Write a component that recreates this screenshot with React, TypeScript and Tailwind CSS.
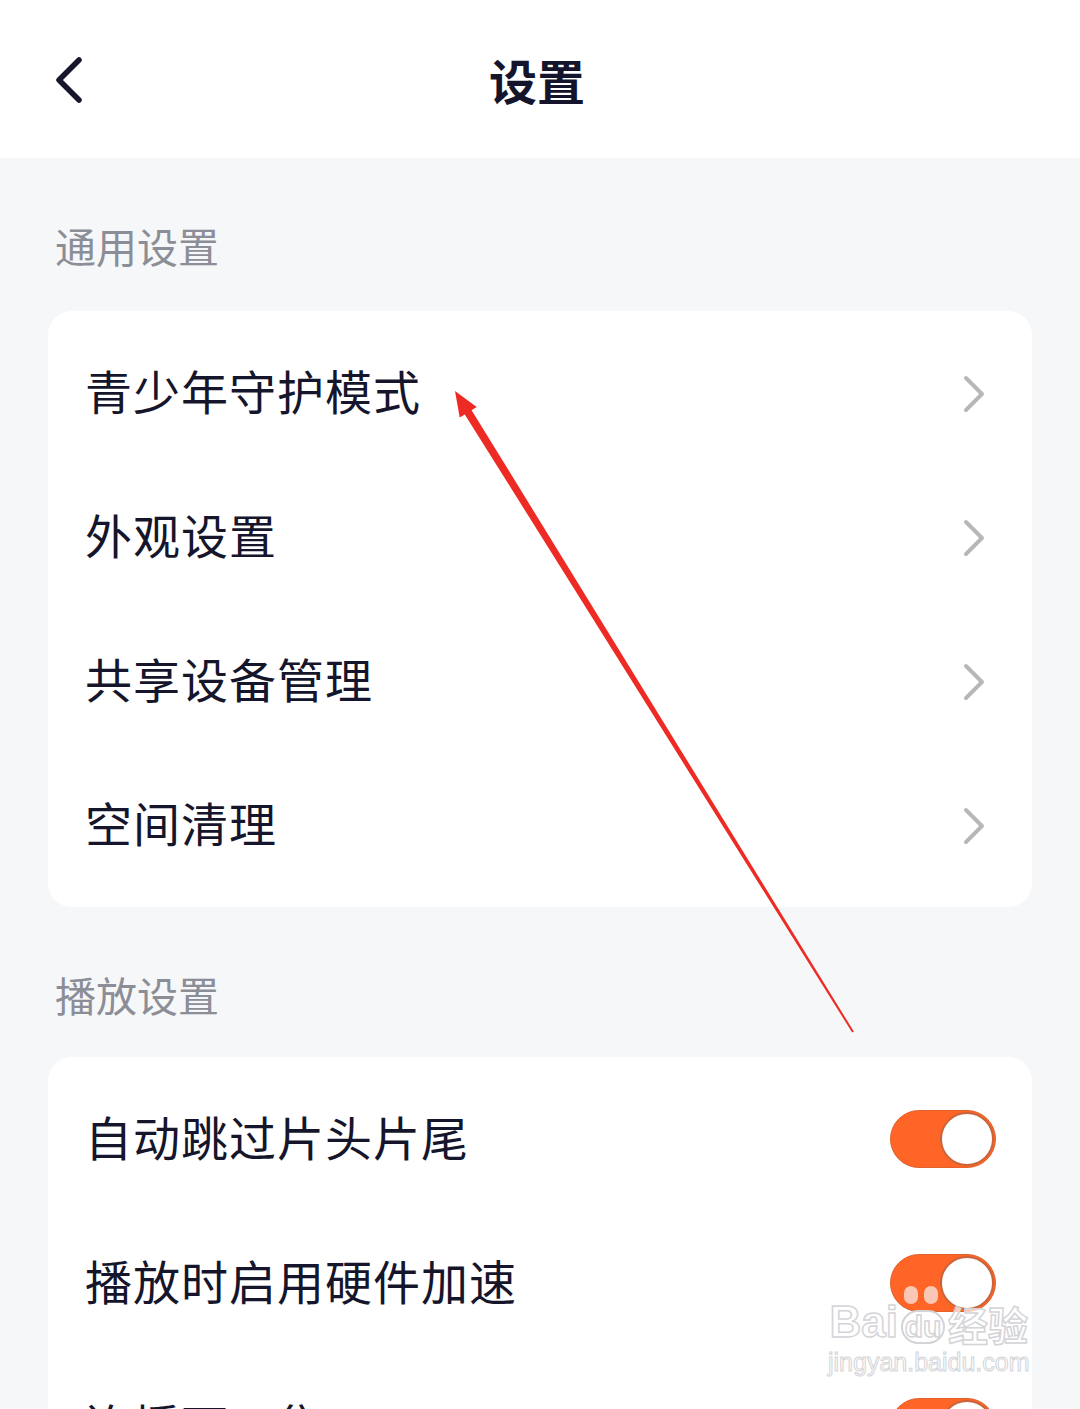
import React from "react"

const general = ["青少年守护模式", "外观设置", "共享设备管理", "空间清理"]
const playback = ["自动跳过片头片尾", "播放时启用硬件加速", "连播下一集"]

function Chevron() {
  return (
    <svg width="24" height="38" viewBox="0 0 24 38" fill="none">
      <path d="M4 3 L20 19 L4 35" stroke="#b8b8bc" strokeWidth="4" strokeLinecap="round" strokeLinejoin="round" />
    </svg>
  )
}

function Toggle() {
  return (
    <div className="w-[106px] h-[58px] rounded-full bg-[#ff6526] border border-[#e0622c] flex items-center justify-end pr-[1px]">
      <div className="w-[54px] h-[54px] rounded-full bg-white border-2 border-[#c8643a]" />
    </div>
  )
}

function Row({ label, right }: { label: string; right: React.ReactNode }) {
  return (
    <div className="h-[144px] flex items-center justify-between pl-[37px]">
      <span className="text-[47px] leading-none pb-[8px] text-[#15152b] tracking-[1px]">{label}</span>
      {right}
    </div>
  )
}

export default function App() {
  return (
    <div
      className="relative w-[1080px] h-[1409px] overflow-hidden bg-[#f6f7f9]"
      style={{ fontFamily: '"Noto Sans CJK SC", "Noto Sans", sans-serif' }}
    >
      {/* Header */}
      <div className="h-[158px] bg-white grid grid-cols-[1fr_auto_1fr] items-center">
        <div className="pl-[52px] pt-[2px]">
          <svg width="34" height="48" viewBox="0 0 34 48" fill="none">
            <path d="M27 4 L7 24 L27 44" stroke="#16162c" strokeWidth="5.5" strokeLinecap="round" strokeLinejoin="round" />
          </svg>
        </div>
        <h1 className="text-[48px] font-bold leading-none text-[#14142a] pr-[6px]">设置</h1>
        <div />
      </div>

      {/* General */}
      <div className="px-[48px]">
        <div className="pt-[67px] pb-[45px] pl-[7px] text-[41px] leading-[41px] text-[#8b8e96]">通用设置</div>
        <div className="bg-white rounded-[24px] py-[10px]">
          {general.map((g) => (
            <Row key={g} label={g} right={<div className="pr-[46px] pt-[2px]"><Chevron /></div>} />
          ))}
        </div>

        {/* Playback */}
        <div className="pt-[67px] pb-[42px] pl-[7px] text-[41px] leading-[41px] text-[#8b8e96]">播放设置</div>
        <div className="bg-white rounded-[24px] py-[10px]">
          {playback.map((p) => (
            <Row key={p} label={p} right={<div className="pr-[36px]"><Toggle /></div>} />
          ))}
        </div>
      </div>

      {/* Red annotation arrow */}
      <svg className="absolute left-0 top-0 pointer-events-none" width="1080" height="1409">
        <polygon
          points="455,391 476.7,407 471.6,410.2 853.8,1031.5 852.2,1032.5 464.8,414.4 459.7,417.6"
          fill="#ee2a24"
        />
      </svg>

      {/* Watermark */}
      <div className="absolute left-[828px] top-[1300px] flex flex-col items-center pointer-events-none">
        <div className="flex items-end gap-[2px]">
          <span className="text-[44px] leading-none font-bold text-white/70 [-webkit-text-stroke:1.5px_#d4d4d8]" style={{ fontFamily: '"Liberation Sans", sans-serif' }}>Bai</span>
          <div className="relative w-[46px] h-[44px] flex items-end justify-center">
            <div className="absolute top-[-14px] left-[4px] w-[14px] h-[18px] rounded-full bg-[#f9c7b5]" />
            <div className="absolute top-[-14px] left-[24px] w-[14px] h-[18px] rounded-full bg-[#f9c7b5]" />
            <span className="text-[30px] leading-none font-bold text-white/70 [-webkit-text-stroke:1.5px_#d4d4d8] border-2 border-[#d4d4d8] rounded-full px-[2px]" style={{ fontFamily: '"Liberation Sans", sans-serif' }}>du</span>
          </div>
          <span className="text-[40px] leading-none font-bold text-white/70 [-webkit-text-stroke:1.5px_#d4d4d8]">经验</span>
        </div>
        <span className="mt-[6px] text-[25px] leading-none text-white/70 [-webkit-text-stroke:1px_#d4d4d8]" style={{ fontFamily: '"Liberation Sans", sans-serif' }}>jingyan.baidu.com</span>
      </div>
    </div>
  )
}
